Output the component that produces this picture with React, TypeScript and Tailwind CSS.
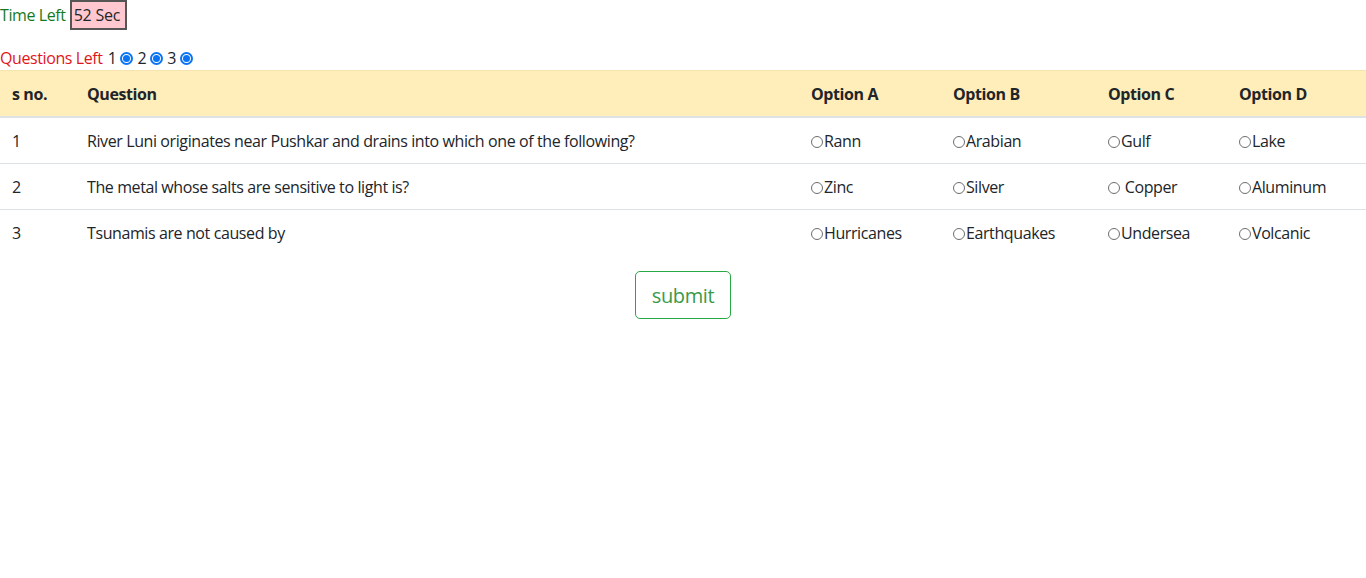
import React from "react";

const rows = [
  { n: "1", q: "River Luni originates near Pushkar and drains into which one of the following?", opts: ["Rann", "Arabian", "Gulf", "Lake"] },
  { n: "2", q: "The metal whose salts are sensitive to light is?", opts: ["Zinc", "Silver", " Copper", "Aluminum"] },
  { n: "3", q: "Tsunamis are not caused by", opts: ["Hurricanes", "Earthquakes", "Undersea", "Volcanic"] },
];

function Radio() {
  return <span className="inline-block w-[12px] h-[12px] rounded-full border border-[#6e6e6e] bg-white align-[-1px] mr-[1px]" />;
}

function Checked() {
  return (
    <span className="inline-flex items-center justify-center w-[13px] h-[13px] rounded-full border-[2px] border-[#0b74f4] bg-white ml-[4px] mr-[4px] align-[-1px]">
      <span className="w-[7px] h-[7px] rounded-full bg-[#0b74f4]" />
    </span>
  );
}

export default function App() {
  const widths = ["w-[75px]", "w-[724px]", "w-[142px]", "w-[155px]", "w-[131px]", "w-[139px]"];
  const cell = "pt-[13px] pb-[11px] px-[12px]";
  return (
    <div className="font-['Segoe_UI','Open_Sans',sans-serif] text-[16px] tracking-[-0.4px] text-[#212529] leading-[21px] bg-white min-h-[578px]">
      <div className="mb-[16px] h-[30px] flex items-center">
        <span className="text-[#137a1f] mr-[4px]">Time Left</span>
        <span className="inline-block border-2 border-[#555] bg-[#ffc8d0] pl-[2px] pr-[5px] py-[1px] leading-[24px] tracking-[-0.2px] self-start">52 Sec</span>
      </div>
      <div className="h-[24px] flex items-center">
        <span className="text-[#e0161a] mr-[5px]">Questions Left</span>
        <span>1</span><Checked /><span>2</span><Checked /><span>3</span><Checked />
      </div>
      <table className="w-full border-collapse table-fixed mb-[16px]">
        <colgroup>
          {widths.map((w, i) => <col key={i} className={w} />)}
        </colgroup>
        <thead>
          <tr className="bg-[#ffeeba]">
            {["s no.", "Question", "Option A", "Option B", "Option C", "Option D"].map((h) => (
              <th key={h} className={`text-left font-bold ${cell} border-t border-[#f5e3b0] border-b-2 border-b-[#dee2e6]`}>{h}</th>
            ))}
          </tr>
        </thead>
        <tbody>
          {rows.map((r, ri) => (
            <tr key={r.n}>
              <td className={`${cell} ${ri > 0 ? "border-t border-[#dee2e6]" : ""}`}>{r.n}</td>
              <td className={`${cell} ${ri > 0 ? "border-t border-[#dee2e6]" : ""}`}>{r.q}</td>
              {r.opts.map((o, i) => (
                <td key={i} className={`${cell} whitespace-pre ${ri > 0 ? "border-t border-[#dee2e6]" : ""}`}>
                  <Radio />{o}
                </td>
              ))}
            </tr>
          ))}
        </tbody>
      </table>
      <div className="flex justify-center">
        <button className="border border-[#28a745] text-[#3a9a4a] rounded-[5px] text-[20px] leading-[30px] pl-[16px] pr-[16px] pt-[9px] pb-[7px] bg-white">submit</button>
      </div>
    </div>
  );
}
